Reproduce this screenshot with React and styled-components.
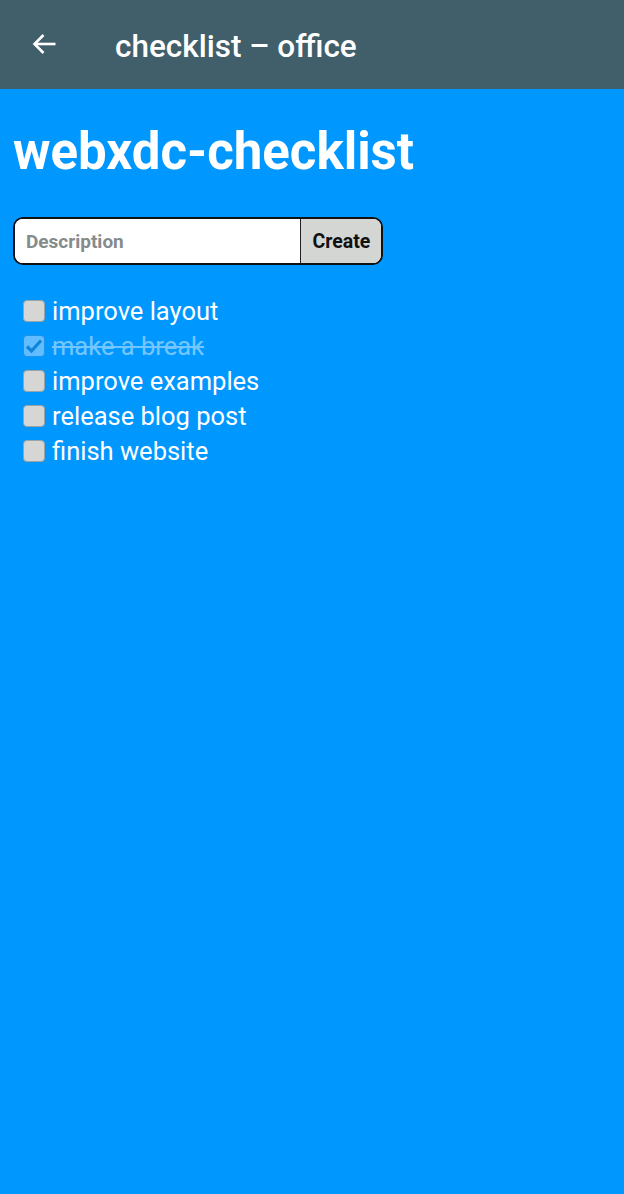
import React, { useState } from 'react';
import styled, { createGlobalStyle } from 'styled-components';

const GlobalStyle = createGlobalStyle`
	html, body {
		margin: 0;
		padding: 0;
		background: #0097ff;
		font-family: Roboto, 'Liberation Sans', sans-serif;
	}
`;

const initialItems = [
	{ id: 1, text: 'improve layout', done: false },
	{ id: 2, text: 'make a break', done: true },
	{ id: 3, text: 'improve examples', done: false },
	{ id: 4, text: 'release blog post', done: false },
	{ id: 5, text: 'finish website', done: false }
];

export default function App() {
	const [items, setItems] = useState(initialItems);
	const toggle = (id) =>
		setItems(items.map((it) => (it.id === id ? { ...it, done: !it.done } : it)));

	return (
		<Page>
			<GlobalStyle />
			<Header>
				<BackButton aria-label="back">
					<svg width="26" height="24" viewBox="0 0 26 24" fill="none" stroke="#fff" strokeWidth="2.6">
						<path d="M3.5 12h21" />
						<path d="M12.5 3L3.5 12l9 9" />
					</svg>
				</BackButton>
				<HeaderTitle>checklist – office</HeaderTitle>
			</Header>
			<Main>
				<Title>webxdc-checklist</Title>
				<Form onSubmit={(e) => e.preventDefault()}>
					<Input placeholder="Description" />
					<CreateButton type="submit">Create</CreateButton>
				</Form>
				<List>
					{items.map((item) => (
						<Item key={item.id} done={item.done} onClick={() => toggle(item.id)}>
							<Box checked={item.done}>
								{item.done && (
									<svg width="18" height="16" viewBox="0 0 18 16">
										<path d="M2 8.5l4.5 4.5L16 2.5" fill="none" stroke="#1f6fb0" strokeWidth="3.2" />
									</svg>
								)}
							</Box>
							<Label done={item.done}>{item.text}</Label>
						</Item>
					))}
				</List>
			</Main>
		</Page>
	);
}

const Page = styled.div`
	min-height: 1194px;
	background: #0097ff;
`;
const Header = styled.div`
	height: 89px;
	background: #405f6b;
	display: flex;
	align-items: center;
	box-sizing: border-box;
	padding: 0 0 0 31px;
`;
const BackButton = styled.div`
	display: flex;
	align-items: center;
	width: 26px;
	height: 24px;
	margin-right: 58px;
	margin-top: -2px;
`;
const HeaderTitle = styled.div`
	color: #fff;
	font-size: 31.5px;
	font-weight: 500;
	margin-top: 4px;
`;
const Main = styled.div`
	padding: 0 13px;
`;
const Title = styled.h1`
	margin: 0;
	padding-top: 37px;
	font-size: 51px;
	font-weight: 700;
	color: #fff;
	line-height: 1;
`;
const Form = styled.form`
	display: flex;
	width: 370px;
	height: 48px;
	box-sizing: border-box;
	border: 2px solid #111;
	border-radius: 10px;
	overflow: hidden;
	margin-top: 40px;
	background: #fff;
`;
const Input = styled.input`
	flex: 1;
	border: none;
	outline: none;
	padding: 0 0 0 11px;
	font-family: Roboto, 'Liberation Sans', sans-serif;
	font-size: 19px;
	font-weight: 700;
	color: #333;
	min-width: 0;
	&::placeholder {
		color: #858b8b;
	}
`;
const CreateButton = styled.button`
	width: 81px;
	border: none;
	border-left: 1.5px solid #222;
	background: #d4d6d3;
	font-family: Roboto, 'Liberation Sans', sans-serif;
	font-size: 19.5px;
	font-weight: 700;
	color: #111;
	padding: 0 0 0 1px;
`;
const List = styled.div`
	margin-top: 28px;
	padding-left: 10px;
	display: flex;
	flex-direction: column;
`;
const Item = styled.div`
	display: flex;
	align-items: center;
	height: 35px;
	cursor: pointer;
	opacity: ${(p) => (p.done ? 0.45 : 1)};
`;
const Box = styled.div`
	width: 22px;
	height: 22px;
	box-sizing: border-box;
	border-radius: 4px;
	border: 1.5px solid ${(p) => (p.checked ? '#3a8fd0' : '#9aa3a8')};
	background: ${(p) => (p.checked ? '#d8ecff' : '#d6d7d5')};
	display: flex;
	align-items: center;
	justify-content: center;
	margin-right: 7px;
`;
const Label = styled.span`
	color: #fff;
	font-size: 25.5px;
	text-decoration: ${(p) => (p.done ? 'line-through' : 'none')};
`;
